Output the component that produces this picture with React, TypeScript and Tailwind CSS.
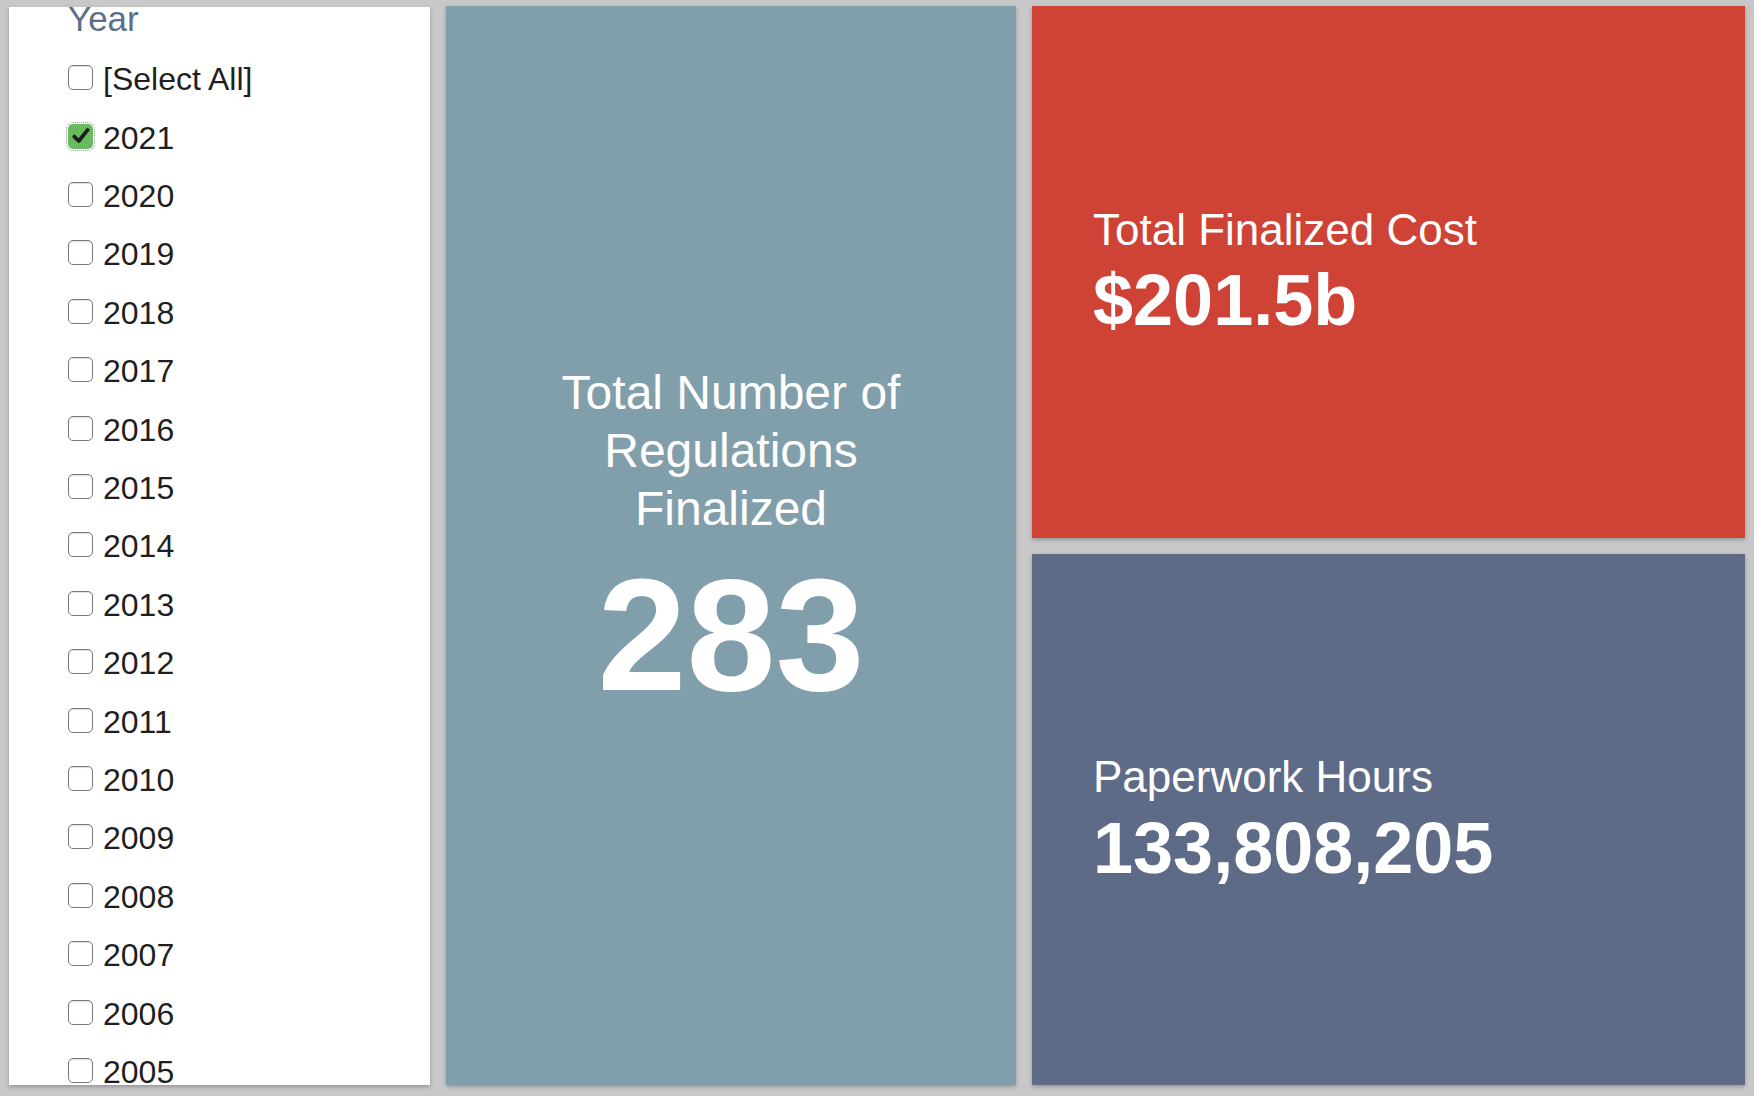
import React from 'react';

const years = [2021, 2020, 2019, 2018, 2017, 2016, 2015, 2014, 2013, 2012, 2011, 2010, 2009, 2008, 2007, 2006, 2005];

const Box = ({ checked }: { checked?: boolean }) => {
  if (checked) {
    return (
      <span className="flex h-[25px] w-[25px] shrink-0 items-center justify-center rounded-[5px] bg-[#66bb5c] outline-1 outline-dotted outline-offset-1 outline-[#9a9a9a]">
        <svg width="20" height="20" viewBox="0 0 18 18">
          <path d="M3 9.5 L7 13.5 L15 3.5" fill="none" stroke="#1e1e1e" strokeWidth="3.4" strokeLinecap="round" strokeLinejoin="round" />
        </svg>
      </span>
    );
  }
  return <span className="block h-[25px] w-[25px] shrink-0 rounded-[5px] border-[1.5px] border-[#7a7a7a] bg-white shadow-[inset_0_1px_1px_rgba(0,0,0,0.12)]" />;
};

const Row = ({ label, checked }: { label: string; checked?: boolean }) => (
  <label className="flex h-[58.4px] items-center gap-[10px] text-[32px] leading-none text-[#1f1f1f]">
    <Box checked={checked} />
    <span className="pt-[3px]">{label}</span>
  </label>
);

export default function App() {
  return (
    <div className="flex h-[1096px] w-full gap-[16px] bg-[#c8c8c8] pb-[11px] pl-[9px] pr-[9px] pt-[6px] font-['Liberation_Sans',Arial,sans-serif]">
      {/* year filter */}
      <div className="mt-[1px] w-[421px] shrink-0 overflow-hidden bg-white shadow-[0_2px_4px_rgba(0,0,0,0.25)]">
        <div className="-mt-[6px] pl-[59px]">
          <div className="h-[35px] text-[35px] leading-none text-[#5d6e8c]">Year</div>
          <div className="mt-[12.6px]">
            <Row label="[Select All]" />
            {years.map((y) => (
              <Row key={y} label={String(y)} checked={y === 2021} />
            ))}
          </div>
        </div>
      </div>

      {/* count tile */}
      <div className="flex w-[570px] shrink-0 flex-col items-center justify-center bg-[#819eab] pb-[12px] text-white shadow-[0_2px_4px_rgba(0,0,0,0.25)]">
        <div className="text-center text-[48px] leading-[58px]">
          Total Number of
          <br />
          Regulations
          <br />
          Finalized
        </div>
        <div className="mt-[17px] text-[160px] font-bold leading-none">283</div>
      </div>

      {/* right column */}
      <div className="flex flex-1 flex-col gap-[16px]">
        <div className="flex flex-1 flex-col justify-center bg-[#cf4236] pl-[61px] text-white shadow-[0_2px_4px_rgba(0,0,0,0.25)]">
          <div className="text-[44px] leading-none">Total Finalized Cost</div>
          <div className="mt-[12px] text-[72px] font-bold leading-none">$201.5b</div>
        </div>
        <div className="flex flex-1 flex-col justify-center bg-[#5e6b87] pl-[61px] text-white shadow-[0_2px_4px_rgba(0,0,0,0.25)]">
          <div className="text-[44px] leading-none">Paperwork Hours</div>
          <div className="mt-[13px] text-[72px] font-bold leading-none">133,808,205</div>
        </div>
      </div>
    </div>
  );
}
